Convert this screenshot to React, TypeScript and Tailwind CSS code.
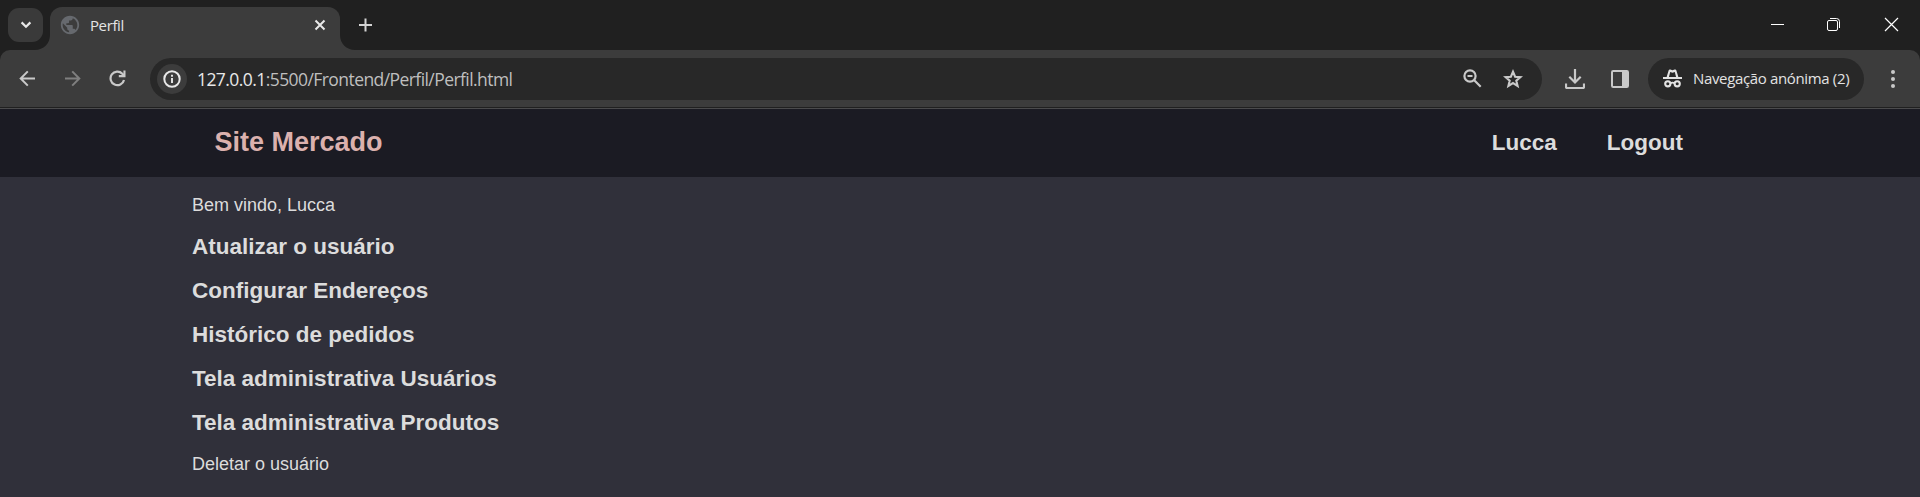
import type { ReactNode } from "react";
import { MdPublic } from "react-icons/md";

type IconProps = { w: number; h?: number; className?: string; children: ReactNode };

function Icon({ w, h = w, className = "", children }: IconProps) {
  return (
    <svg width={w} height={h} viewBox={`0 0 ${w} ${h}`} fill="none" stroke="currentColor" className={`block shrink-0 ${className}`}>
      {children}
    </svg>
  );
}

function TabStrip() {
  return (
    <div className="flex h-[50px] items-start bg-[#202020]">
      <button className="mt-2 ml-2 flex h-[34px] w-[35px] items-center justify-center rounded-[11px] bg-[#3a3a3a] text-[#e8e8e8]">
        <Icon w={12} h={8}>
          <path d="M1.6 1.4 6 5.8l4.4-4.4" strokeWidth="2.2" />
        </Icon>
      </button>
      <div className="relative mt-[7px] ml-[7px] flex h-[43px] w-[290px] items-center rounded-t-[12px] bg-[#3c3c3c] pb-[7px] pl-[9px] text-[#e4e4e4]">
        <svg width="15" height="15" viewBox="0 0 15 15" className="absolute bottom-0 -left-[15px]">
          <path d="M15 0v15H0C8.500 15 15 8.500 15 0Z" fill="#3c3c3c" />
        </svg>
        <svg width="15" height="15" viewBox="0 0 15 15" className="absolute -right-[15px] bottom-0">
          <path d="M0 0v15h15C6.500 15 0 8.500 0 0Z" fill="#3c3c3c" />
        </svg>
        <MdPublic size={22} className="shrink-0 text-[#66696e]" />
        <span className="ml-[9px] text-[15px] tracking-[-0.4px]">Perfil</span>
        <Icon w={12} className="mr-[14px] ml-auto text-[#e8e8e8]">
          <path d="m1.500 1.500 9 9m0-9-9 9" strokeWidth="2" />
        </Icon>
      </div>
      <button className="mt-[18px] ml-[18px] text-[#d4d4d4]">
        <Icon w={14}>
          <path d="M7.500 .5v13M1 7h13" strokeWidth="2" />
        </Icon>
      </button>
      <div className="mt-[17px] mr-[21px] ml-auto flex items-center gap-[42px] text-white">
        <Icon w={15}>
          <path d="M1 7.500h13" strokeWidth="1" />
        </Icon>
        <Icon w={15}>
          <rect x=".5" y="3.500" width="10" height="10" rx="1.500" />
          <path d="M3 1.500h6.500q3 0 3 3V11" />
        </Icon>
        <Icon w={15}>
          <path d="m1 1 13 13M14 1 1 14" strokeWidth="1.200" />
        </Icon>
      </div>
    </div>
  );
}

function Toolbar() {
  return (
    <div className="bg-[#202020]">
      <div className="flex h-[57px] items-center rounded-t-[10px] bg-[#3c3c3c]">
        <div className="ml-[19px] flex items-center gap-[28px] text-[#c9c9c9]">
          <Icon w={17}>
            <path d="M16 8.500H2M8.800 1.400 1.700 8.500l7.100 7.100" strokeWidth="2" />
          </Icon>
          <Icon w={17} className="text-[#7f7f7f]">
            <path d="M1 8.500h14M8.200 1.400l7.100 7.100-7.100 7.100" strokeWidth="2" />
          </Icon>
          <Icon w={17}>
            <path d="M15 9.900A6.800 6.800 0 1 1 13.300 3.700L15 5.400" strokeWidth="2.200" />
            <path d="M16.500 .5V7.200H9.800V5.100H14.400V.5Z" fill="currentColor" stroke="none" />
          </Icon>
        </div>
        <div className="ml-[24px] flex h-[42px] w-[1392px] items-center rounded-full bg-[#282828] pl-[7px] text-[#c9c9c9]">
          <span className="flex size-[30px] items-center justify-center rounded-full bg-[#3c3c3c] text-[#e8e8e8]">
            <Icon w={18}>
              <circle cx="9" cy="9" r="7.700" strokeWidth="2" />
              <path d="M9 8v5M9 4.800v2" strokeWidth="1.900" />
            </Icon>
          </span>
          <span className="ml-[10px] pt-[2px] text-[17.5px] tracking-[-0.57px] text-[#bfbfbf]">
            <span className="text-[#e8e8e8]">127.0.0.1</span>:5500/Frontend/Perfil/Perfil.html
          </span>
          <Icon w={19} className="ml-auto">
            <circle cx="7" cy="7" r="5.600" strokeWidth="2.200" />
            <path d="M4.500 7h5M11 11l6.700 6.700" strokeWidth="2.200" />
          </Icon>
          <Icon w={20} className="mr-[19px] ml-[21px]">
            <path d="m10 2.700 2.100 5 5.300.4-4.100 3.500 1.300 5.300L10 14l-4.600 2.900 1.300-5.300-4.100-3.500 5.300-.4Z" strokeWidth="2.100" />
          </Icon>
        </div>
        <Icon w={20} className="ml-[23px] text-[#c9c9c9]">
          <path d="M10 0v13M4.300 7.800l5.700 5.700 5.700-5.700M1 14.500V18q0 1 1 1h16q1 0 1-1v-3.500" strokeWidth="2.200" />
        </Icon>
        <Icon w={18} className="ml-[26px] text-[#c9c9c9]">
          <rect x="1" y="1" width="16" height="16" rx="1.200" strokeWidth="2" />
          <path d="M11 1h6v16h-6Z" fill="currentColor" stroke="none" />
        </Icon>
        <div className="ml-[19px] flex h-[42px] w-[216px] items-center rounded-full bg-[#282828] pl-[15px] text-[#e3e3e3]">
          <Icon w={19}>
            <path d="M0 8.100h19v1.900H0ZM3.500 8.500 5.600 1.500Q6 0 7.400.5L9.500 1.300 11.600.5Q13 0 13.400 1.500L15.500 8.500h-2.300L11.800 3 9.500 3.800 7.200 3 5.800 8.500Z" fill="currentColor" stroke="none" />
            <circle cx="4.800" cy="14.800" r="2.600" strokeWidth="2.100" />
            <circle cx="14.200" cy="14.800" r="2.600" strokeWidth="2.100" />
            <path d="M7.200 14.500q2.300-1.600 4.600 0" strokeWidth="1.700" />
          </Icon>
          <span className="ml-[11px] text-[15px] tracking-[-0.35px] whitespace-nowrap">Navegação anónima (2)</span>
        </div>
        <Icon w={4} h={18} className="ml-[26.5px] text-[#c9c9c9]">
          <g fill="currentColor" stroke="none">
            <circle cx="2" cy="2" r="2" />
            <circle cx="2" cy="9" r="2" />
            <circle cx="2" cy="16" r="2" />
          </g>
        </Icon>
      </div>
    </div>
  );
}

const links = [
  "Atualizar o usuário",
  "Configurar Endereços",
  "Histórico de pedidos",
  "Tela administrativa Usuários",
  "Tela administrativa Produtos",
];

export default function App() {
  return (
    <div className="h-[497px] w-[1920px] overflow-hidden bg-[#30303a]">
      <div className="font-['Open_Sans','Noto_Sans',sans-serif]">
        <TabStrip />
        <Toolbar />
        <div className="h-[2px] border-t border-[#202020] bg-[#4b4b4d]" />
      </div>
      <div className="font-['Liberation_Sans',Arial,sans-serif] text-[#dcdcdc]">
        <header className="flex h-[68px] items-center justify-between bg-[#1b1b23] pr-[237px] pb-[2px] pl-[214.5px] font-bold">
          <h1 className="text-[27px] leading-[34px] text-[#dbb1ae]">Site Mercado</h1>
          <nav className="flex gap-[50px] pt-[2px] text-[22.5px] leading-[28px]">
            <a>Lucca</a>
            <a>Logout</a>
          </nav>
        </header>
        <main className="pt-[9px] pl-[192px] text-[18px]">
          <p className="leading-[38px]">Bem vindo, Lucca</p>
          <ul className="pt-px text-[22.5px] leading-[44px] font-bold">
            {links.map((label) => (
              <li key={label}>{label}</li>
            ))}
          </ul>
          <p className="leading-[38px]">Deletar o usuário</p>
        </main>
      </div>
    </div>
  );
}
